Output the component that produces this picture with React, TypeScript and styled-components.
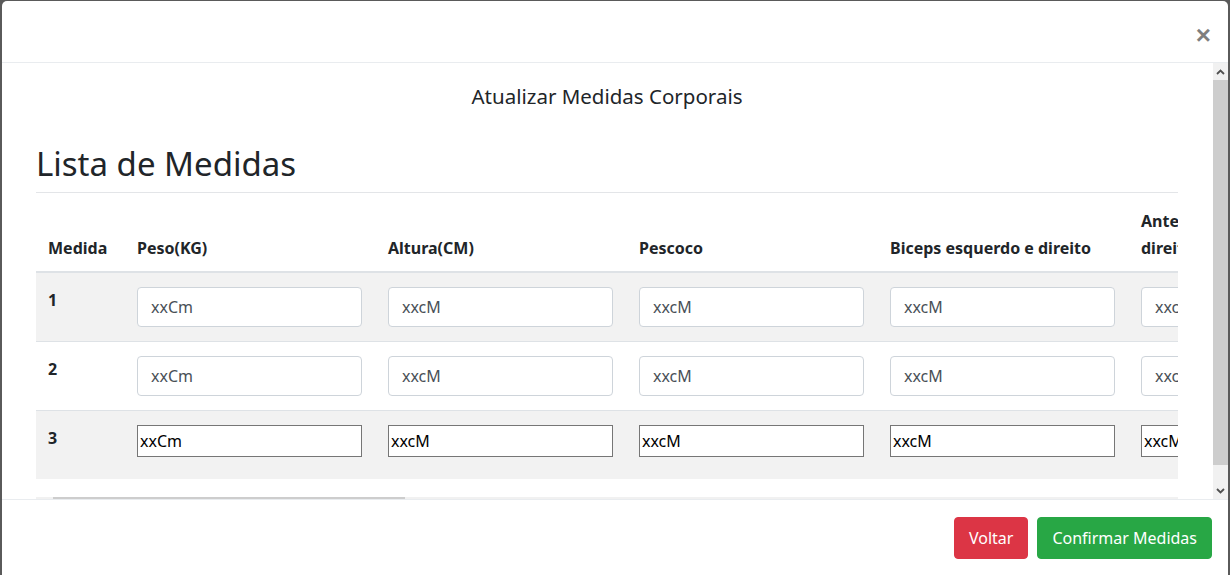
import styled, { createGlobalStyle } from 'styled-components';

const GlobalStyle = createGlobalStyle`
  html, body {
    margin: 0;
    height: 100%;
    overflow: hidden;
    background: #5a5a5a;
  }
  body {
    font-family: 'Noto Sans', 'Open Sans', sans-serif;
    color: #212529;
  }
  * {
    box-sizing: border-box;
  }
`;

const Modal = styled.div`
  margin: 1px 2px 0 2px;
  height: calc(100vh - 1px);
  background: #fff;
  border-radius: 5px 5px 0 0;
  display: flex;
  flex-direction: column;
  overflow: hidden;
`;

const ModalHeader = styled.header`
  flex: none;
  height: 62px;
  border-bottom: 1px solid #e9ecef;
  display: flex;
  justify-content: flex-end;
  align-items: center;
  padding: 6px 17px 0 0;
`;

const CloseButton = styled.button`
  border: 0;
  background: transparent;
  padding: 0;
  font-family: 'Liberation Sans', Arial, sans-serif;
  font-size: 26px;
  font-weight: 700;
  line-height: 1;
  color: #000;
  opacity: 0.5;
  cursor: pointer;
`;

const BodyFrame = styled.div`
  flex: 1;
  min-height: 0;
  display: flex;
  overflow: hidden;
`;

const BodyContent = styled.div`
  flex: 1;
  min-width: 0;
  overflow: hidden;
  padding: 21px 35px 16px 34px;
`;

const VTrack = styled.div`
  flex: none;
  width: 15px;
  display: flex;
  flex-direction: column;
  background: #f1f1f1;
`;

const ArrowButton = styled.div`
  flex: none;
  height: 17px;
  display: flex;
  align-items: center;
  justify-content: center;
  color: #505050;
`;

const VThumb = styled.div`
  flex: none;
  height: 385px;
  background: #cdcdcd;
`;

const TrackSpace = styled.div`
  flex: 1;
`;

const Subtitle = styled.h5`
  margin: 0 0 36px;
  text-align: center;
  font-size: 20.5px;
  font-weight: 400;
  line-height: 24px;
`;

const Heading = styled.h1`
  margin: 0 0 8px;
  font-size: 33px;
  font-weight: 400;
  line-height: 40px;
`;

const Divider = styled.hr`
  margin: 0 0 3px;
  border: 0;
  border-top: 1px solid #e3e5e8;
`;

const TableScroll = styled.div`
  overflow: hidden;
`;

const Table = styled.table`
  width: 3602px;
  border-collapse: collapse;
  table-layout: fixed;
  margin-bottom: 18px;
`;

const HeadCell = styled.th<{ $first?: boolean }>`
  width: ${(p) => (p.$first ? 88 : 251)}px;
  padding: 12px 13px 9px ${(p) => (p.$first ? 12 : 13)}px;
  text-align: left;
  vertical-align: bottom;
  font-size: 16px;
  font-weight: 700;
  line-height: 27px;
  border-bottom: 2px solid #dee2e6;
`;

const Row = styled.tr<{ $striped: boolean }>`
  height: 68px;
  background: ${(p) => (p.$striped ? '#f2f2f2' : '#fff')};
  & + & {
    border-top: 1px solid #dee2e6;
  }
`;

const Cell = styled.td<{ $first?: boolean }>`
  padding: 14px 13px 14px ${(p) => (p.$first ? 12 : 13)}px;
  vertical-align: top;
  font-size: 16px;
  line-height: 27px;
  font-weight: ${(p) => (p.$first ? 700 : 400)};
`;

const FormInput = styled.input`
  display: block;
  width: 225px;
  height: 40px;
  padding: 0 13px;
  border: 1px solid #ced4da;
  border-radius: 4px;
  background: #fff;
  font-family: inherit;
  font-size: 16px;
  color: #495057;
  outline: none;
`;

const PlainInput = styled.input`
  display: block;
  width: 225px;
  height: 32px;
  padding: 1px 2px;
  border: 1px solid #767676;
  border-radius: 0;
  background: #fff;
  font-family: inherit;
  font-size: 16px;
  color: #000;
  outline: none;
`;

const HTrack = styled.div`
  display: flex;
  height: 17px;
  background: #f1f1f1;
`;

const HButton = styled.div`
  flex: none;
  width: 17px;
`;

const HThumb = styled.div`
  flex: none;
  width: 352px;
  background: #cdcdcd;
`;

const Footer = styled.footer`
  flex: none;
  border-top: 1px solid #e9ecef;
  padding: 17px 16px 16px;
  display: flex;
  justify-content: flex-end;
  gap: 9px;
`;

const Button = styled.button<{ $variant: 'danger' | 'success' }>`
  height: 42px;
  padding: 0 14px;
  border: 1px solid ${(p) => (p.$variant === 'danger' ? '#dc3545' : '#28a745')};
  border-radius: 4px;
  background: ${(p) => (p.$variant === 'danger' ? '#dc3545' : '#28a745')};
  color: #fff;
  font-family: inherit;
  font-size: 16px;
  line-height: 1.5;
  cursor: pointer;
`;

const Chevron = ({ up }: { up?: boolean }) => (
  <svg width="9" height="6" viewBox="0 0 9 6">
    <polyline
      points={up ? '1,5 4.5,1.5 8,5' : '1,1 4.5,4.5 8,1'}
      fill="none"
      stroke="currentColor"
      strokeWidth="1.8"
    />
  </svg>
);

const columns = [
  'Peso(KG)',
  'Altura(CM)',
  'Pescoco',
  'Biceps esquerdo e direito',
  'Antebraço esquerdo e direito',
  'Peitoral',
  'Cintura',
  'Abdomen',
  'Quadril',
  'Coxa esquerda e direita',
  'Panturrilha esquerda e direita',
  'Ombro',
  'Punho',
  'Gordura Corporal(%)',
];

const rows = [1, 2, 3];

const App = () => {
  return (
    <>
      <GlobalStyle />
      <Modal>
        <ModalHeader>
          <CloseButton type="button" aria-label="Close">
            ×
          </CloseButton>
        </ModalHeader>
        <BodyFrame>
          <BodyContent>
            <Subtitle>Atualizar Medidas Corporais</Subtitle>
            <Heading>Lista de Medidas</Heading>
            <Divider />
            <TableScroll>
              <Table>
                <thead>
                  <tr>
                    <HeadCell $first>Medida</HeadCell>
                    {columns.map((col) => (
                      <HeadCell key={col}>{col}</HeadCell>
                    ))}
                  </tr>
                </thead>
                <tbody>
                  {rows.map((n) => (
                    <Row key={n} $striped={n % 2 === 1}>
                      <Cell $first>{n}</Cell>
                      {columns.map((col, i) => {
                        const value = i === 0 ? 'xxCm' : 'xxcM';
                        return (
                          <Cell key={col}>
                            {n === 3 ? (
                              <PlainInput defaultValue={value} />
                            ) : (
                              <FormInput defaultValue={value} />
                            )}
                          </Cell>
                        );
                      })}
                    </Row>
                  ))}
                </tbody>
              </Table>
            </TableScroll>
            <HTrack>
              <HButton />
              <HThumb />
            </HTrack>
          </BodyContent>
          <VTrack>
            <ArrowButton>
              <Chevron up />
            </ArrowButton>
            <VThumb />
            <TrackSpace />
            <ArrowButton>
              <Chevron />
            </ArrowButton>
          </VTrack>
        </BodyFrame>
        <Footer>
          <Button $variant="danger">Voltar</Button>
          <Button $variant="success">Confirmar Medidas</Button>
        </Footer>
      </Modal>
    </>
  );
};

export default App;
